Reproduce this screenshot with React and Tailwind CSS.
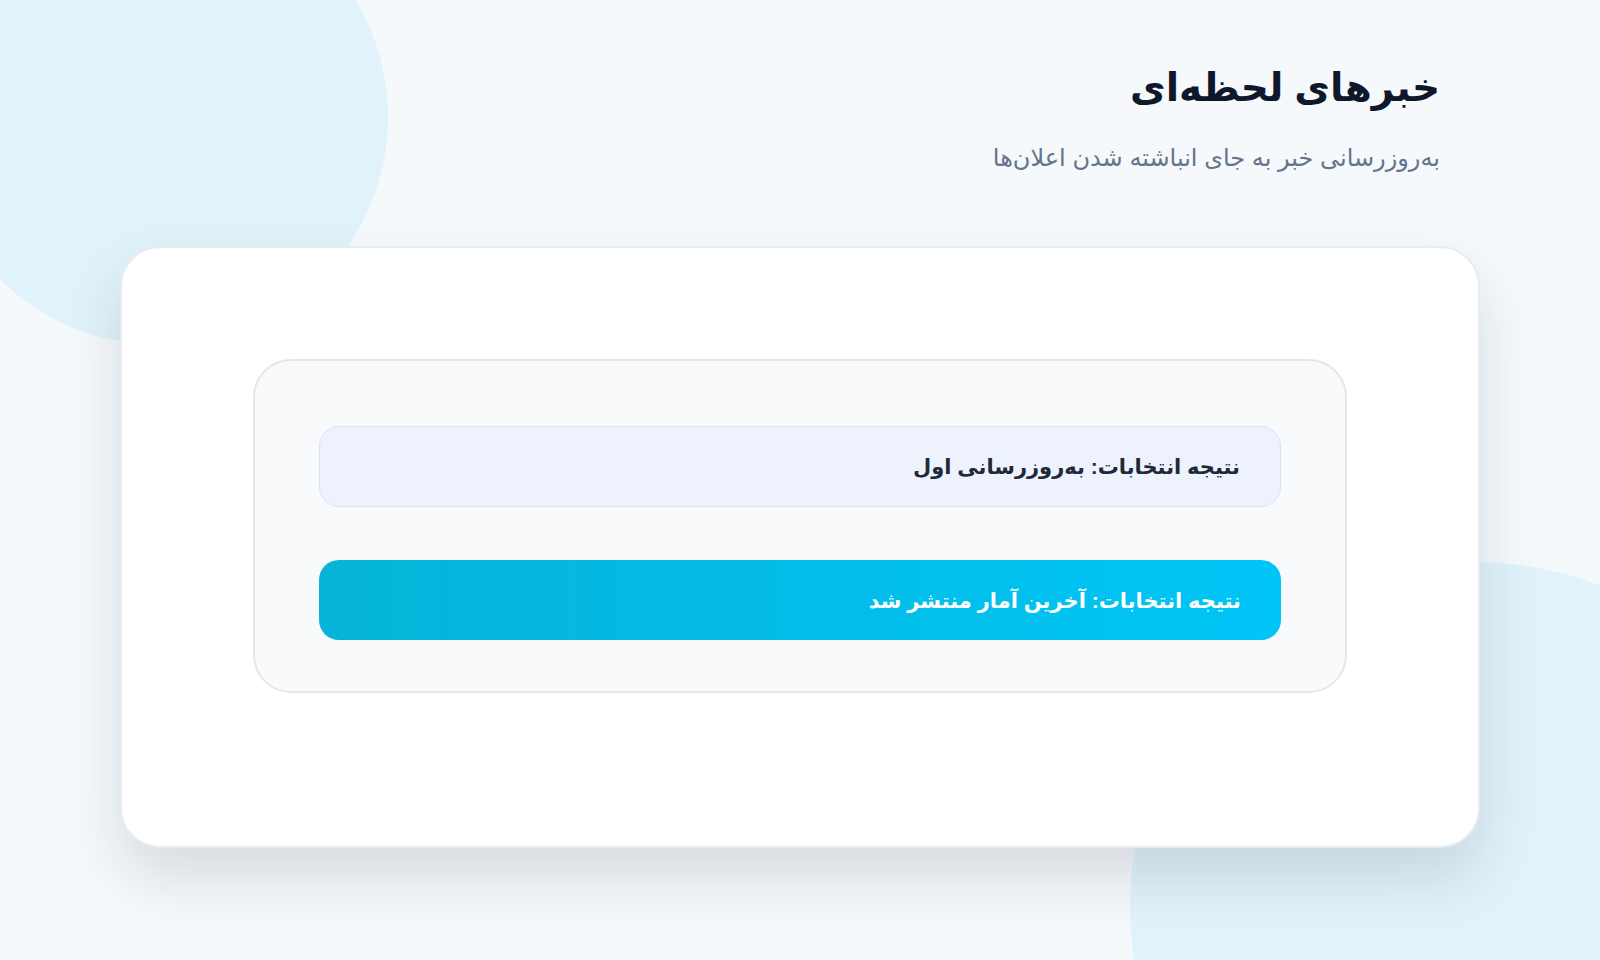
import React from "react";

const items = [
  { id: 1, text: "نتیجه انتخابات: به‌روزرسانی اول", active: false },
  { id: 2, text: "نتیجه انتخابات: آخرین آمار منتشر شد", active: true },
];

const NewsRow = ({ text, active }) => (
  <div
    className={
      active
        ? "h-[80px] flex items-center px-10 rounded-[20px] bg-gradient-to-r from-[#06b4d8] to-[#00c5f7] text-white"
        : "h-[81px] flex items-center px-10 rounded-[20px] border border-[#dbe3fb] bg-[#eef2fd] text-[#1e293b]"
    }
  >
    <span className="text-[21px] font-bold">{text}</span>
  </div>
);

export default function App() {
  return (
    <div
      dir="rtl"
      className="relative min-h-screen h-[960px] overflow-hidden bg-[#f5f9fc]"
      style={{ fontFamily: '"Liberation Sans", "DejaVu Sans", sans-serif' }}
    >
      {/* background blobs */}
      <div className="absolute left-[-68px] top-[-111px] w-[456px] h-[456px] rounded-full bg-[#e0f3fb]" />
      <div className="absolute left-[1130px] top-[562px] w-[690px] h-[690px] rounded-full bg-[#e0f3fb]" />

      <div className="relative">
        {/* header */}
        <div className="px-[160px] pt-[63px]">
          <h1 className="text-[39px] font-bold leading-[1.3] text-[#0f172a]">خبرهای لحظه‌ای</h1>
          <p className="mt-[27px] text-[24px] leading-[1.4] text-[#64748b]">
            به‌روزرسانی خبر به جای انباشته شدن اعلان‌ها
          </p>
        </div>

        {/* card */}
        <div className="mx-[120px] mt-[72px] h-[602px] rounded-[40px] border-2 border-[#e6ecf4] bg-white px-[131px] pt-[111px] shadow-[0_30px_60px_rgba(15,23,42,0.13)]">
          <div className="h-[334px] rounded-[38px] border-2 border-[#e5e7eb] bg-[#f8fafc] px-[64px] pt-[65px]">
            <div className="flex flex-col gap-[53px]">
              {items.map((item) => (
                <NewsRow key={item.id} text={item.text} active={item.active} />
              ))}
            </div>
          </div>
        </div>
      </div>
    </div>
  );
}
